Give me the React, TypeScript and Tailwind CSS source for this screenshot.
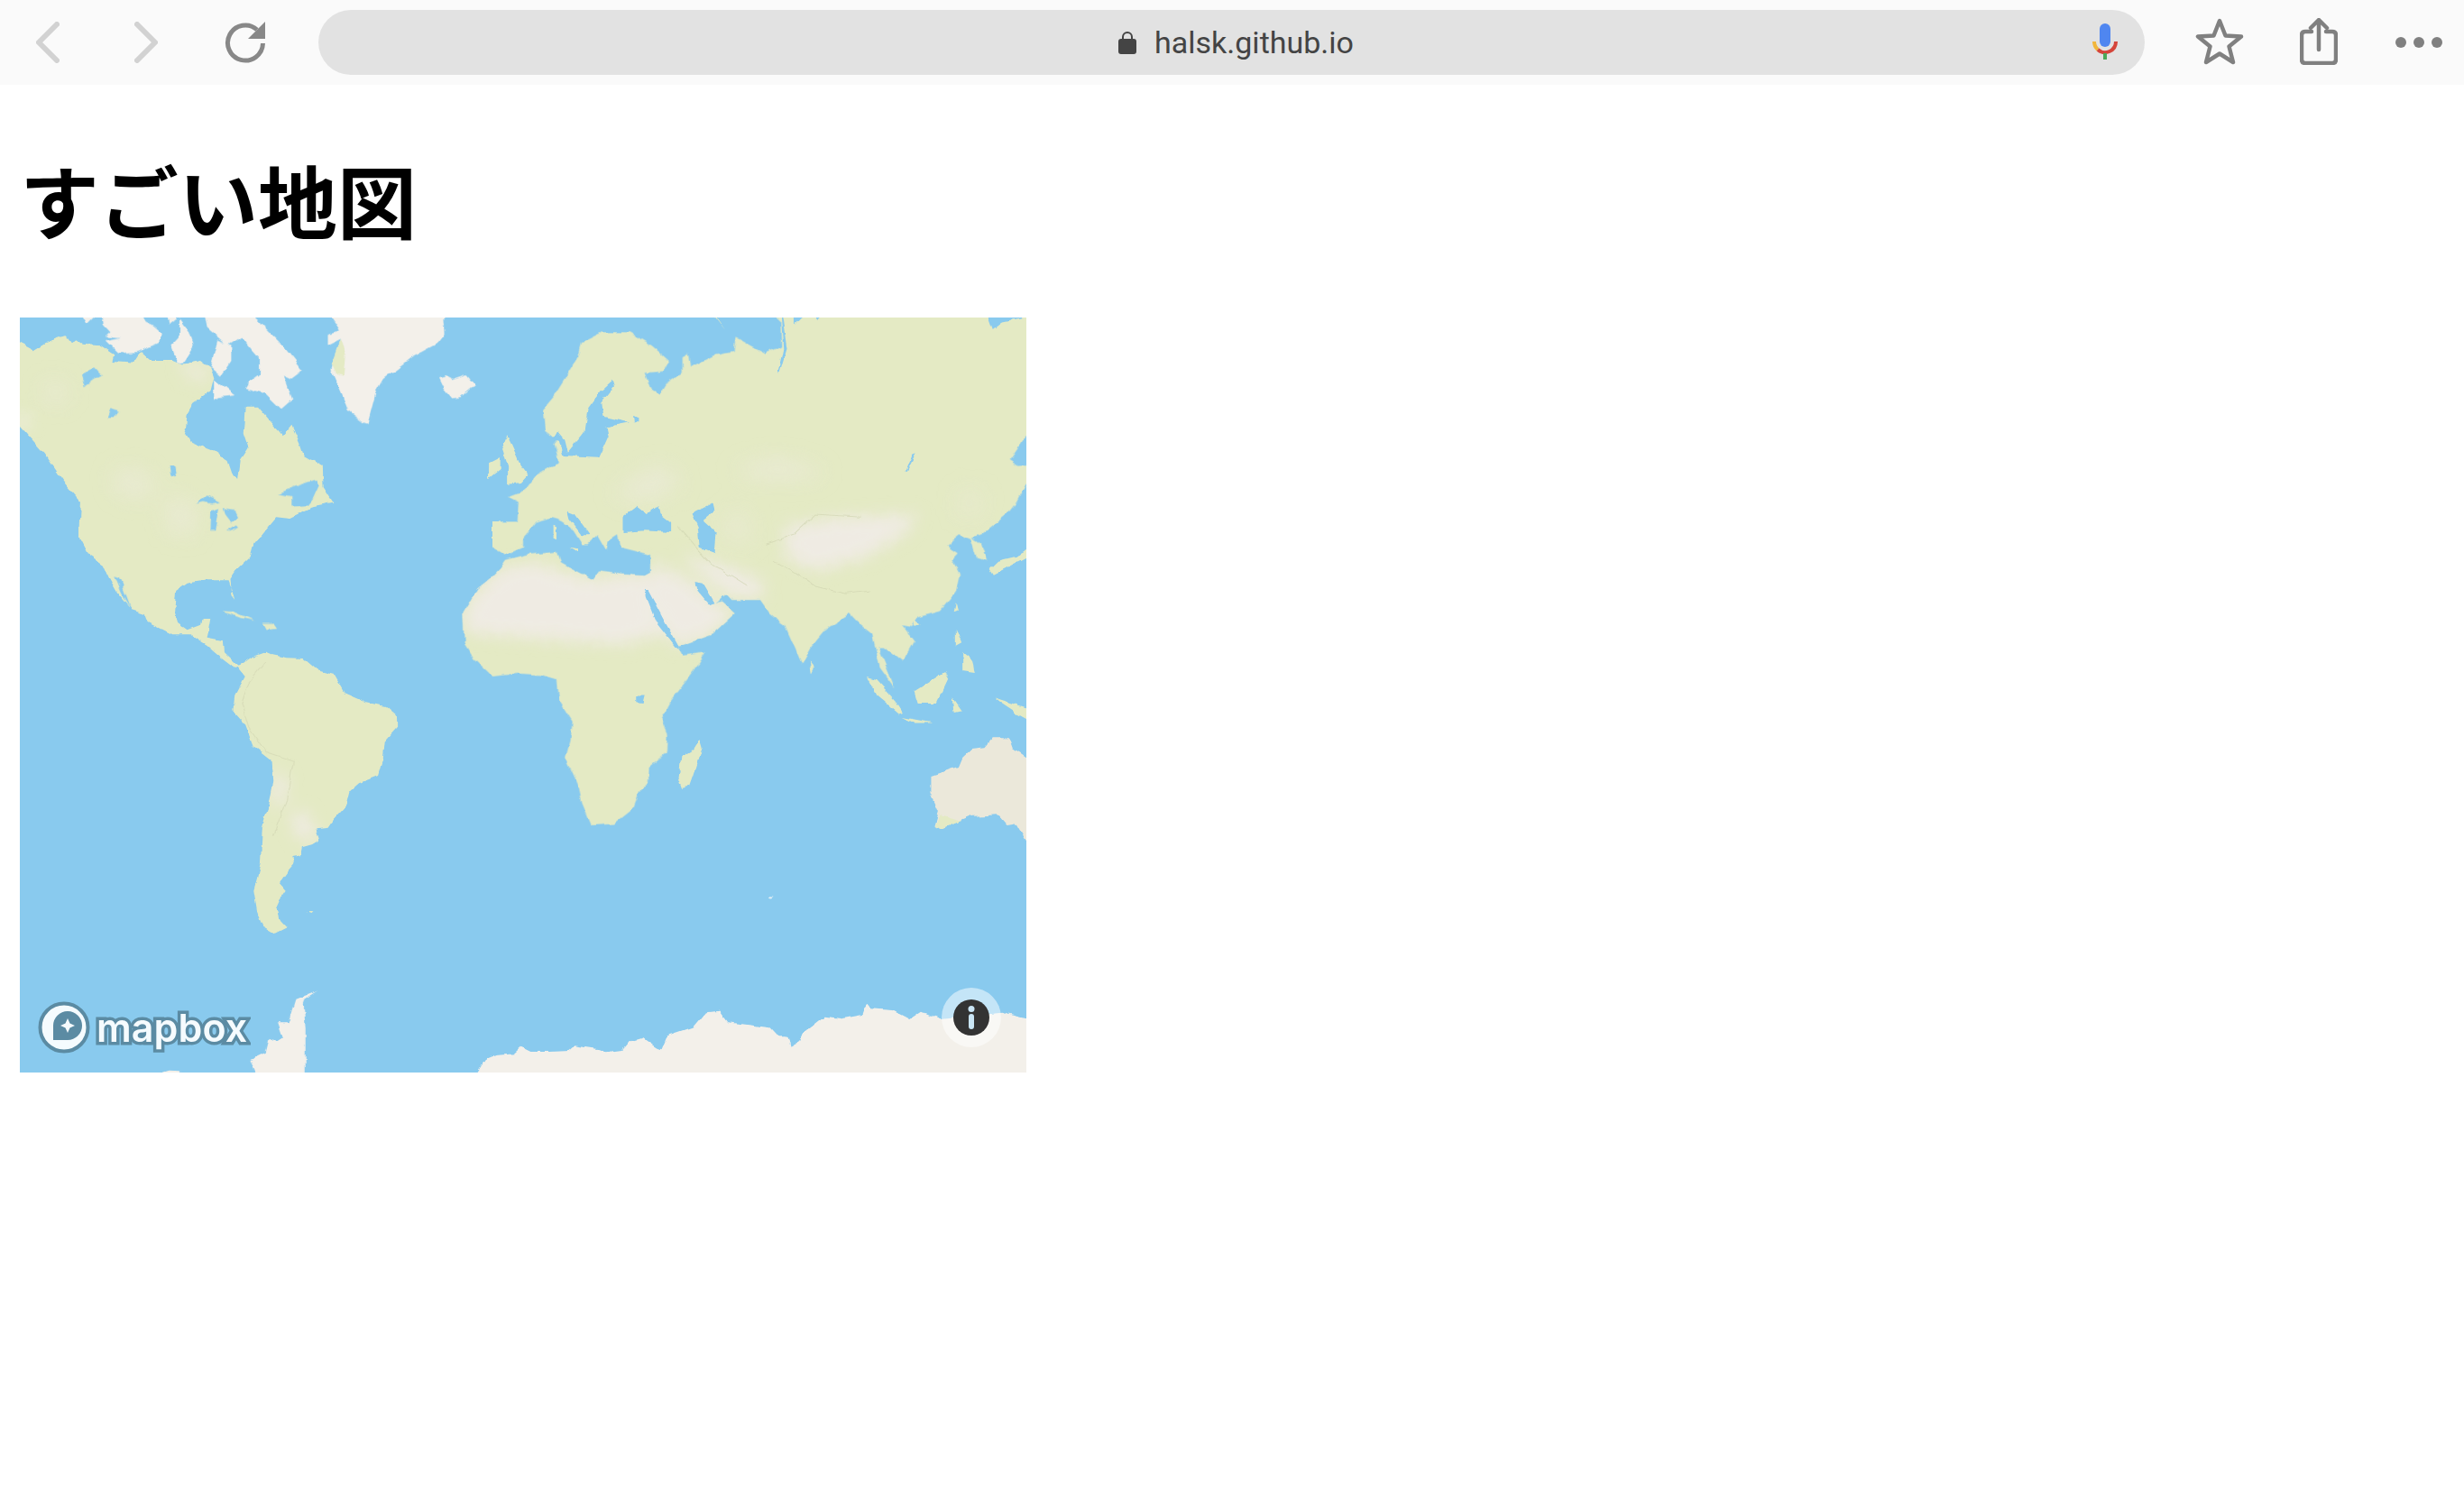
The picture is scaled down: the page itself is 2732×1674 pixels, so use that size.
const WATER = "#89caee";
const LAND = "#e4eac4";
const SAND = "#efebe3";
const ICE = "#f3f0ea";

// coastlines, traced per zoom crop (each group below maps its own crop coords onto the map)
// shapes touching the frame run past it so the coast filter leaves no gaps at the edge
const WEST = "translate(-22,-12) scale(.3827,.3333)";
const EAST = "translate(478,-12) scale(.4209,.3333)";
const SOUTH_WEST = "translate(-22,348) scale(.3827,.3333)";
const SOUTH_EAST = "translate(478,448) scale(.4209,.3333)";

const northAmerica = "20,100 57,122 95,145 130,120 160,108 190,97 205,120 222,112 240,125 290,130 330,160 325,180 390,185 410,150 440,180 500,180 520,190 540,190 580,180 610,205 620,235 610,280 560,320 540,360 535,410 555,450 620,480 660,510 675,560 690,575 697,510 720,470 705,420 710,335 750,335 790,390 820,430 845,395 870,460 880,495 935,530 937,600 965,650 900,665 895,675 840,705 800,700 770,740 735,790 725,830 680,880 665,905 670,960 680,975 660,910 600,910 540,920 510,945 505,1010 515,1050 545,1075 580,1060 585,1035 610,1035 600,1100 645,1110 648,1150 690,1195 680,1200 640,1165 600,1125 550,1090 500,1090 430,1050 420,1020 380,1005 340,950 315,900 300,860 260,830 230,765 235,650 190,590 130,490 57,395 20,370";
const westLakes = [
  "245,265 235,225 275,205 295,230 270,245",
  "310,370 320,340 350,350 330,370",
  "490,530 505,530 510,565 495,560",
  "570,655 600,625 640,650 615,655 590,650",
  "610,745 612,680 635,670 625,745",
  "645,670 680,675 690,700 670,720 650,690",
  "655,745 690,728 695,735 665,748",
  "805,622 850,600 918,575 925,590 905,640 890,660 845,665 845,630",
  "330,895 345,900 380,1005 350,950",
];
const arctic = [
  "225,10 270,10 270,37 250,60",
  "295,10 300,60 320,85 305,100 350,105 305,115 340,155 400,150 460,120 470,90 440,60 420,50 400,10",
  "480,10 510,10 510,37 490,55",
  "520,40 545,80 560,130 530,185 515,190 495,130 520,100",
  "590,10 740,10 740,37 820,130 875,210 840,240 820,230 830,260 845,310 815,340 770,290 710,270 720,250 750,225 750,170 720,130 700,100 660,130 600,70",
  "630,110 670,130 670,180 640,230 610,200",
  "620,240 680,295 640,300 620,310",
  "945,10 1285,10 1290,90 1270,120 1190,170 1110,240 1090,280 1065,390 1050,385 1010,350 990,290 960,210 985,110 950,130 950,90 985,80 975,60",
  "1270,235 1290,228 1310,240 1350,225 1375,260 1335,300 1310,305 1285,270",
];
const caribbean = ["645,1012 680,1015 740,1045 700,1035", "760,1052 790,1052 800,1068 770,1072"];

const eurasia = "110,715 175,715 178,650 150,632 195,610 225,560 265,530 285,520 272,460 285,440 270,435 245,410 240,345 270,300 300,240 335,165 345,120 400,85 470,85 530,130 575,180 560,215 510,220 525,270 550,290 565,260 610,220 610,165 625,155 630,205 700,160 745,150 750,100 800,135 830,155 870,130 868,50 835,10 1560,10 1560,410 1515,430 1470,510 1495,530 1560,525 1560,590 1515,590 1490,650 1465,690 1395,760 1370,770 1395,790 1410,845 1385,835 1370,775 1340,760 1305,795 1335,820 1320,840 1340,890 1330,950 1290,1010 1230,1030 1215,1065 1190,1060 1220,1110 1190,1180 1140,1130 1125,1130 1170,1270 1130,1200 1110,1090 1080,1060 1050,1020 990,1070 950,1130 925,1190 880,1060 840,1020 815,975 740,975 725,955 700,985 715,980 750,1020 690,1090 600,1130 565,1100 510,945 525,885 525,825 445,800 440,760 415,780 410,815 385,760 360,790 345,790 320,740 280,705 265,700 225,715 190,770 190,800 145,825 110,800";
const africa = "145,842 200,825 280,815 290,850 340,885 375,908 390,880 450,890 510,895 525,885 540,960 600,1135 610,1160 670,1150 640,1210 580,1310 555,1370 572,1420 570,1480 522,1530 520,1590 500,1605 480,1670 430,1720 370,1725 345,1650 335,1590 302,1500 315,1440 320,1380 285,1310 280,1240 240,1225 180,1220 110,1230 60,1170 35,1120 32,1020 70,940 100,910 130,870";
const eastIslands = [
  "148,430 160,460 185,530 203,560 185,585 150,590 150,530 135,470",
  "100,520 130,500 130,540 100,570",
  "680,10 700,10 700,37 725,80",
  "270,725 278,730 278,775 270,770",
  "315,800 335,805 335,815",
  "945,1180 958,1200 950,1220",
  "1420,870 1440,845 1490,830 1560,780 1560,805 1430,890",
  "1330,985 1335,1010 1325,1015",
  "1222,1040 1232,1060 1220,1065",
  "1330,1070 1345,1120 1330,1130",
  "1350,1150 1370,1170 1380,1215 1350,1210",
  "1300,1215 1310,1240 1280,1320 1230,1320 1220,1280",
  "1095,1230 1120,1240 1170,1310 1190,1350 1180,1355 1120,1290",
  "1190,1365 1270,1385 1220,1385",
  "1320,1300 1345,1345 1325,1350",
  "1430,1300 1560,1350 1560,1400 1490,1350",
];
const eastWater = [
  "455,700 490,665 515,690 545,660 550,690 580,720 580,750 510,745 455,750",
  "635,690 690,655 695,680 665,710 700,750 695,820 655,800 650,730",
  "395,280 425,245 430,265 395,320 400,365 470,385 410,400 415,430 390,500 300,495 350,420 360,340",
  "283,415 300,440 310,490 295,495 285,450 272,440",
  "305,680 325,690 365,760 345,760 310,705",
  "645,915 665,920 695,985 680,990 650,945",
  "508,945 520,945 560,1040 600,1130 600,1140 590,1130 540,1050",
  "1225,490 1200,550 1198,545 1215,495",
  "480,360 495,365 495,385 482,385",
  "490,1295 510,1295 505,1320 490,1318",
  "870,5 885,140 865,225 862,215 875,140 868,5",
  "905,5 925,5 925,37 905,62",
  "950,5 970,5 970,37 965,45",
  "1405,5 1505,5 1505,37 1450,50 1425,75",
];
const deserts = [
  "32,1020 70,940 100,910 130,870 220,850 300,880 375,908 450,890 525,890 510,945 560,1090 450,1125 300,1110 180,1100 40,1085",
  "540,850 640,920 700,990 750,1020 690,1090 600,1130 565,1090 510,945",
  "880,730 1020,700 1230,690 1200,750 1100,830 960,880 880,830",
  "610,820 720,860 820,910 820,975 730,960 640,870",
];
const steppes = [
  "750,540 850,505 970,540 960,570 800,570",
  "430,620 560,520 600,600 480,650",
  "730,680 770,680 780,790 740,790",
  "1350,610 1385,610 1380,700 1350,700",
];

const southAmerica = "685,115 715,100 740,80 770,68 790,78 830,88 880,90 920,130 970,145 1000,205 1060,235 1120,250 1150,280 1150,320 1115,365 1110,420 1095,480 1040,505 1015,530 1005,575 965,625 950,650 915,655 925,690 905,705 875,715 870,745 845,750 850,775 835,795 810,835 830,860 810,895 800,920 810,960 830,985 795,1005 765,985 745,930 735,860 745,820 755,770 760,650 775,590 790,500 785,430 735,385 710,310 675,265 680,215 710,150";
const peninsula = "740,1500 740,1467 725,1425 770,1400 780,1355 800,1365 820,1350 805,1300 835,1300 855,1225 920,1195 885,1220 880,1240 885,1320 885,1500";
const antarctica = "40,1200 70,1165 90,1125 120,1110 165,1105 185,1082 210,1098 260,1098 310,1095 325,1078 390,1090 410,1102 450,1095 470,1065 505,1052 545,1085 555,1090 570,1045 640,1015 670,970 710,965 730,1000 840,1018 860,1045 885,1045 892,1085 920,1065 930,1035 985,980 1030,988 1085,975 1095,940 1105,955 1165,960 1210,990 1240,965 1290,990 1450,968 1515,988 1560,1000 1560,1200";
const madagascar = "655,60 662,90 640,180 630,215 610,222 600,185 607,115 640,90";
const australia = "1560,140 1515,120 1480,90 1470,55 1425,55 1405,85 1370,90 1345,120 1335,150 1265,180 1265,240 1285,300 1275,345 1295,355 1370,315 1440,310 1465,345 1490,340 1515,395 1560,420";

function Polys({ list, fill }: { list: string[]; fill: string }) {
  return (
    <>
      {list.map((points) => (
        <polygon key={points} points={points} fill={fill} />
      ))}
    </>
  );
}

function WorldMap() {
  return (
    <svg viewBox="0 0 1116 837" className="block w-[1116px] h-[837px]">
      <defs>
        <filter id="soft" x="-20%" y="-20%" width="140%" height="140%">
          <feGaussianBlur stdDeviation="22 26" />
        </filter>
        <filter id="softer" x="-30%" y="-30%" width="160%" height="160%">
          <feGaussianBlur stdDeviation="34 36" />
        </filter>
        {/* roughens the traced coastlines */}
        <filter id="coast" x="-30" y="-30" width="1176" height="897" filterUnits="userSpaceOnUse">
          <feTurbulence type="fractalNoise" baseFrequency="0.08" numOctaves="2" seed="4" result="noise" />
          <feDisplacementMap in="SourceGraphic" in2="noise" scale="6" xChannelSelector="R" yChannelSelector="G" />
        </filter>
        <clipPath id="oldWorld">
          <polygon transform={EAST} points={eurasia} />
          <polygon transform={EAST} points={africa} />
        </clipPath>
        <clipPath id="newWorld">
          <polygon transform={SOUTH_WEST} points={southAmerica} />
          <polygon transform={WEST} points={northAmerica} />
        </clipPath>
      </defs>
      <rect width="1116" height="837" fill={WATER} />

      <g filter="url(#coast)">
        <polygon transform={WEST} points={northAmerica} fill={LAND} />
        <polygon transform={SOUTH_WEST} points={southAmerica} fill={LAND} />
        <g clipPath="url(#newWorld)">
          <g transform={WEST} filter="url(#softer)" opacity="0.55">
            <polygon points="330,540 440,560 430,640 340,620" fill={SAND} />
            <polygon points="490,620 560,660 560,760 490,750" fill={SAND} />
            <polygon points="130,250 190,260 190,320 130,310" fill={SAND} />
          </g>
          <g transform={WEST} filter="url(#soft)">
            <polygon points="50,360 85,370 80,400 50,400" fill={ICE} />
            <polygon points="520,190 610,200 600,250 540,240" fill={SAND} opacity="0.7" />
          </g>
          <g transform={SOUTH_WEST} filter="url(#soft)">
            <polygon points="790,470 830,480 825,570 790,580" fill={SAND} />
            <polygon points="845,600 885,600 925,690 860,690" fill={SAND} />
          </g>
          <g transform={SOUTH_WEST} fill="none" stroke="#cfd3b0" strokeWidth="3" opacity="0.55">
            <polyline points="770,100 720,170 700,240 720,320 770,400 850,430 830,560 790,680" />
          </g>
        </g>
        <g transform={WEST}>
          <Polys list={westLakes} fill={WATER} />
          <Polys list={arctic} fill={ICE} />
          <Polys list={caribbean} fill={LAND} />
          <polygon points="985,110 1000,160 995,230 975,225 960,190" fill={LAND} />
        </g>

        <polygon transform={EAST} points={eurasia} fill={LAND} />
        <polygon transform={EAST} points={africa} fill={LAND} />
        <g clipPath="url(#oldWorld)">
          <g transform={EAST} filter="url(#soft)">
            <Polys list={deserts} fill={SAND} />
          </g>
          <g transform={EAST} filter="url(#softer)" opacity="0.6">
            <Polys list={steppes} fill={SAND} />
          </g>
          <g transform={EAST} fill="none" stroke="#cfd3b0" strokeWidth="3" opacity="0.6">
            <polyline points="850,850 900,880 960,930 1040,955 1110,945" />
            <polyline points="830,790 900,760 960,690 1080,700" />
            <polyline points="600,730 640,790 690,860 780,930" />
          </g>
        </g>
        <g transform={EAST}>
          <Polys list={eastIslands} fill={LAND} />
          <Polys list={eastWater} fill={WATER} />
        </g>

        <g transform={SOUTH_WEST}>
          <polygon points={peninsula} fill={ICE} />
          <polygon points="888,930 910,930 905,937" fill={LAND} />
          <polygon points="470,1500 470,1467 490,1460 520,1462 520,1500" fill={ICE} />
        </g>

        <g transform={SOUTH_EAST}>
          <polygon points={madagascar} fill={LAND} />
          <polygon points={australia} fill="#ebe8da" />
          <polygon points="1275,345 1295,355 1345,330 1290,310" fill={LAND} />
          <polygon points={antarctica} fill={ICE} />
          <polygon points="840,582 852,584 845,590" fill="#dfeef5" />
        </g>
      </g>
    </svg>
  );
}

function MapboxLogo() {
  return (
    <div className="absolute left-[20px] bottom-[21px] flex items-center gap-[7px]">
      <svg viewBox="0 0 58 58" className="w-[58px] h-[58px]">
        <circle cx="29" cy="29" r="26.5" fill="#f5fbfe" stroke="#5b8ba3" strokeWidth="4" />
        <path d="M17 43V27A16 16 0 1 1 33 43Z" fill="#5b8ba3" />
        <path d="M33 19L35.5 24.5L41 27L35.5 29.5L33 35L30.5 29.5L25 27L30.5 24.5Z" fill="#f5fbfe" />
      </svg>
      <span className="font-['Inter',sans-serif] font-semibold text-[43px] leading-none tracking-[0.1px] text-[#f5fbfe] [-webkit-text-stroke:7px_#5b8ba3] [paint-order:stroke_fill]">
        mapbox
      </span>
    </div>
  );
}

function InfoButton() {
  return (
    <div className="absolute right-[28px] bottom-[28px] w-[66px] h-[66px] rounded-full bg-white/50 flex items-center justify-center">
      <svg viewBox="0 0 40 40" className="w-[40px] h-[40px]">
        <circle cx="20" cy="20" r="20" fill="#333333" />
        <circle cx="20" cy="10.5" r="3.5" fill="#c9e5f5" />
        <rect x="17" y="16" width="6" height="17" rx="3" fill="#c9e5f5" />
      </svg>
    </div>
  );
}

function Toolbar() {
  return (
    <header className="h-[94px] bg-[#fafafa] flex items-center">
      <svg viewBox="0 0 26 46" className="ml-[40px] w-[26px] h-[46px]" fill="none" stroke="#d2d2d2" strokeWidth="6" strokeLinecap="round" strokeLinejoin="round">
        <path d="M23 3L3 23L23 43" />
      </svg>
      <svg viewBox="0 0 26 46" className="ml-[83px] w-[26px] h-[46px]" fill="none" stroke="#d2d2d2" strokeWidth="6" strokeLinecap="round" strokeLinejoin="round">
        <path d="M3 3L23 23L3 43" />
      </svg>
      <svg viewBox="0 0 46 46" className="ml-[74px] w-[46px] h-[46px]">
        <path d="M36 9A19.5 19.5 0 1 0 42.5 24" fill="none" stroke="#888888" strokeWidth="5" />
        <path d="M45 0V19H26Z" fill="#888888" />
      </svg>
      <div className="relative ml-[58px] w-[2025px] h-[72px] rounded-full bg-[#e2e2e2] flex items-center justify-center gap-[20px] pl-[10px]">
        <svg viewBox="0 0 20 26" className="w-[20px] h-[26px]">
          <path d="M5 11V7A5 5 0 0 1 15 7V11" fill="none" stroke="#444444" strokeWidth="2" />
          <rect y="9" width="20" height="17" rx="3" fill="#444444" />
        </svg>
        <span className="font-['Roboto',sans-serif] text-[34px] leading-none text-[#444444]">halsk.github.io</span>
        <svg viewBox="0 0 28 40" className="absolute right-[30px] top-[15px] w-[28px] h-[40px]">
          <rect x="8" y="0" width="12" height="26" rx="6" fill="#4f86f0" />
          <path d="M2 20A12 12 0 0 0 6 29" fill="none" stroke="#f1b63c" strokeWidth="4" />
          <path d="M6 29A12 12 0 0 0 26 20" fill="none" stroke="#d5453a" strokeWidth="4" />
          <rect x="12" y="33" width="4" height="7" fill="#4ca958" />
        </svg>
      </div>
      <svg viewBox="0 0 54 52" className="ml-[56px] -mt-[2px] w-[54px] h-[52px]" fill="none" stroke="#808080" strokeWidth="4.5" strokeLinejoin="round">
        <path d="M27 3L33.5 19.5L51 20.5L37.5 31.5L42 49L27 39.5L12 49L16.5 31.5L3 20.5L20.5 19.5Z" />
      </svg>
      <svg viewBox="0 0 42 52" className="ml-[62px] -mt-[2px] w-[42px] h-[52px]" fill="none" stroke="#808080" strokeWidth="4.5" strokeLinecap="round" strokeLinejoin="round">
        <path d="M13 15H6Q2 15 2 19V46Q2 50 6 50H36Q40 50 40 46V19Q40 15 36 15H29" />
        <path d="M21 35V3M12 11L21 2L30 11" />
      </svg>
      <div className="ml-[64px] flex gap-[8px]">
        <span className="w-[12px] h-[12px] rounded-full bg-[#808080]" />
        <span className="w-[12px] h-[12px] rounded-full bg-[#808080]" />
        <span className="w-[12px] h-[12px] rounded-full bg-[#808080]" />
      </div>
    </header>
  );
}

export default function App() {
  return (
    <div className="min-h-[1674px] bg-white">
      <Toolbar />
      <main className="px-[22px]">
        <h1 className="pt-[62px] pb-[68px] text-[88px] leading-[128px] font-bold text-black font-['Noto_Sans_CJK_JP','Liberation_Serif',serif]">
          すごい地図
        </h1>
        <div className="relative w-[1116px] h-[837px] overflow-hidden">
          <WorldMap />
          <MapboxLogo />
          <InfoButton />
        </div>
      </main>
    </div>
  );
}
